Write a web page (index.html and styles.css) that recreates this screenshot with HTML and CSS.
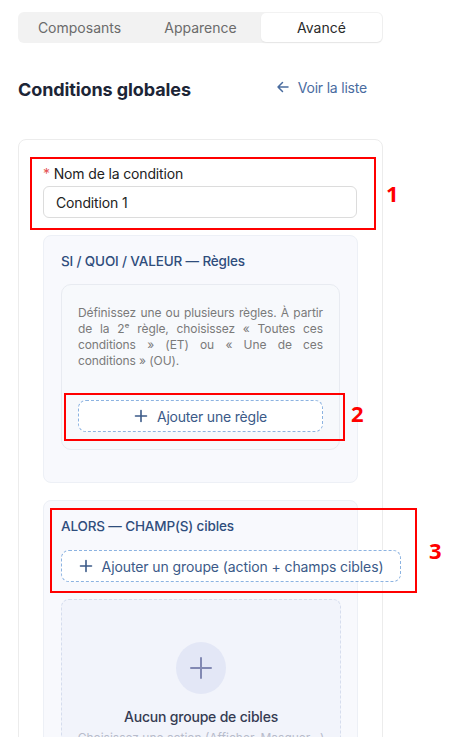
FILE: index.html
```html
<!DOCTYPE html>
<html lang="fr">
<head>
<meta charset="utf-8">
<link rel="stylesheet" href="styles.css">
</head>
<body>
<div class="page">
  <div class="tabs">
    <div class="tab">Composants</div>
    <div class="tab">Apparence</div>
    <div class="tab active">Avancé</div>
  </div>

  <div class="header">
    <h1 class="title">Conditions globales</h1>
    <a class="back">
      <svg width="14" height="14" viewBox="0 0 14 14" fill="none" stroke="currentColor" stroke-width="1.5" stroke-linecap="round" stroke-linejoin="round"><path d="M12 7H2M6.5 2.5L2 7l4.5 4.5"/></svg>
      <span>Voir la liste</span>
    </a>
  </div>

  <div class="card">
    <div class="field">
      <label class="label"><span class="req">*</span> Nom de la condition</label>
      <div class="input">Condition 1</div>
    </div>

    <div class="section">
      <div class="section-title">SI / QUOI / VALEUR — Règles</div>
      <div class="inner">
        <p class="help">Définissez une ou plusieurs règles. À partir de la 2ᵉ règle, choisissez « Toutes ces conditions » (ET) ou « Une de ces conditions » (OU).</p>
        <div class="dashed-btn">
          <svg width="14" height="14" viewBox="0 0 14 14" fill="none" stroke="currentColor" stroke-width="1.6" stroke-linecap="round"><path d="M7 1.5v11M1.5 7h11"/></svg>
          <span>Ajouter une règle</span>
        </div>
      </div>
    </div>

    <div class="section second">
      <div class="section-title">ALORS — CHAMP(S) cibles</div>
      <div class="dashed-btn wide">
        <svg width="14" height="14" viewBox="0 0 14 14" fill="none" stroke="currentColor" stroke-width="1.6" stroke-linecap="round"><path d="M7 1.5v11M1.5 7h11"/></svg>
        <span>Ajouter un groupe (action + champs cibles)</span>
      </div>
      <div class="empty">
        <div class="empty-icon">
          <svg width="24" height="24" viewBox="0 0 24 24" fill="none" stroke="currentColor" stroke-width="2" stroke-linecap="round"><path d="M12 2v20M2 12h20"/></svg>
        </div>
        <div class="empty-title">Aucun groupe de cibles</div>
        <div class="empty-sub">Choisissez une action (Afficher, Masquer…) puis les champs cibles.</div>
      </div>
    </div>
  </div>
</div>

<div class="note note1"></div><div class="num num1">1</div>
<div class="note note2"></div><div class="num num2">2</div>
<div class="note note3"></div><div class="num num3">3</div>
</body>
</html>
```

FILE: styles.css
```css
* { box-sizing: border-box; }
html, body { margin: 0; padding: 0; background: #fff; }
body {
  font-family: Inter, "Noto Sans", sans-serif;
  color: #222;
  position: relative;
  height: 737px;
  overflow: hidden;
}
.page {
  padding: 12px 74px 0 18px;
  width: 457px;
}
.tabs {
  display: grid;
  grid-template-columns: 1fr 1fr 1fr;
  background: #f2f2f2;
  border-radius: 6px;
  padding: 1px;
  height: 31px;
}
.tab {
  display: flex;
  align-items: center;
  justify-content: center;
  font-size: 14px;
  color: #6b6b6b;
}
.tab.active {
  background: #fff;
  color: #2a2a2a;
  border-radius: 5px;
  box-shadow: 0 1px 2px rgba(0,0,0,0.06);
}
.header {
  display: flex;
  align-items: center;
  justify-content: space-between;
  margin-top: 29px;
  padding-right: 16px;
}
.title {
  margin: 0;
  font-size: 18px;
  font-weight: 700;
  color: #1c2536;
  letter-spacing: -0.1px;
  line-height: 24px;
  padding-top: 6px;
}
.back {
  display: flex;
  align-items: center;
  gap: 8px;
  color: #4a6c9f;
  font-size: 14px;
  letter-spacing: -0.2px;
}
.card {
  margin-top: 37px;
  border: 1px solid #ececec;
  border-radius: 8px;
  padding: 25px 24px 40px;
  height: 640px;
}
.field { display: flex; flex-direction: column; gap: 3px; }
.label {
  font-size: 14px;
  color: #222;
  line-height: 18px;
  letter-spacing: -0.15px;
}
.req { color: #e55353; }
.input {
  height: 32px;
  border: 1px solid #dcdcdc;
  border-radius: 6px;
  display: flex;
  align-items: center;
  padding: 0 12px;
  font-size: 14px;
  color: #222;
  letter-spacing: -0.15px;
  margin-right: 1px;
}
.section {
  margin-top: 17px;
  background: #f8f9fd;
  border: 1px solid #edf0f6;
  border-radius: 8px;
  padding: 16px 17px 32px;
}
.section.second { padding-bottom: 0; height: 300px; }
.section-title {
  font-size: 13.5px;
  font-weight: 500;
  color: #2f4d7c;
  line-height: 18px;
  letter-spacing: -0.15px;
}
.inner {
  margin-top: 14px;
  border: 1px solid #e8ebf1;
  border-radius: 10px;
  background: #f7f9fc;
  padding: 20px 16px 17px;
}
.help {
  margin: 0;
  font-size: 12px;
  line-height: 16px;
  color: #7a7a7a;
  text-align: justify;
  letter-spacing: -0.1px;
}
.dashed-btn {
  height: 32px;
  border: 1.5px dashed #8cb3e1;
  border-radius: 8px;
  background: #fff;
  display: flex;
  align-items: center;
  justify-content: center;
  gap: 9px;
  color: #3b5a88;
  font-size: 14px;
  letter-spacing: -0.2px;
  margin-top: 31px;
  white-space: nowrap;
}
.dashed-btn.wide {
  margin-top: 15px;
  width: 340px;
  letter-spacing: -0.1px;
}
.empty {
  margin-top: 17px;
  border: 1.5px dashed #d6ddee;
  border-radius: 8px;
  background: #f2f4fb;
  width: 280px;
  height: 200px;
  display: flex;
  flex-direction: column;
  align-items: center;
  padding-top: 42px;
}
.empty-icon {
  width: 50px;
  height: 52px;
  border-radius: 50%;
  background: #e3e7f6;
  display: flex;
  align-items: center;
  justify-content: center;
  color: #8289b3;
}
.empty-title {
  margin-top: 14px;
  font-size: 14px;
  font-weight: 500;
  color: #353b52;
  letter-spacing: -0.2px;
  line-height: 18px;
}
.empty-sub {
  margin-top: 4px;
  font-size: 12px;
  color: #b8bccb;
  text-align: center;
  padding: 0 10px;
  line-height: 16px;
}

/* annotation overlays */
.note {
  position: absolute;
  border: 2px solid #f00;
}
.note1 { left: 30px; top: 157px; width: 346px; height: 73px; }
.note2 { left: 64px; top: 393px; width: 281px; height: 48px; }
.note3 { left: 50px; top: 508px; width: 367px; height: 85px; }
.num {
  position: absolute;
  color: #f00;
  font-family: "Open Sans", sans-serif;
  font-weight: 700;
  font-size: 22px;
  line-height: 1;
}
.num1 { left: 386px; top: 182px; }
.num2 { left: 351px; top: 402px; }
.num3 { left: 429px; top: 539px; }
```
